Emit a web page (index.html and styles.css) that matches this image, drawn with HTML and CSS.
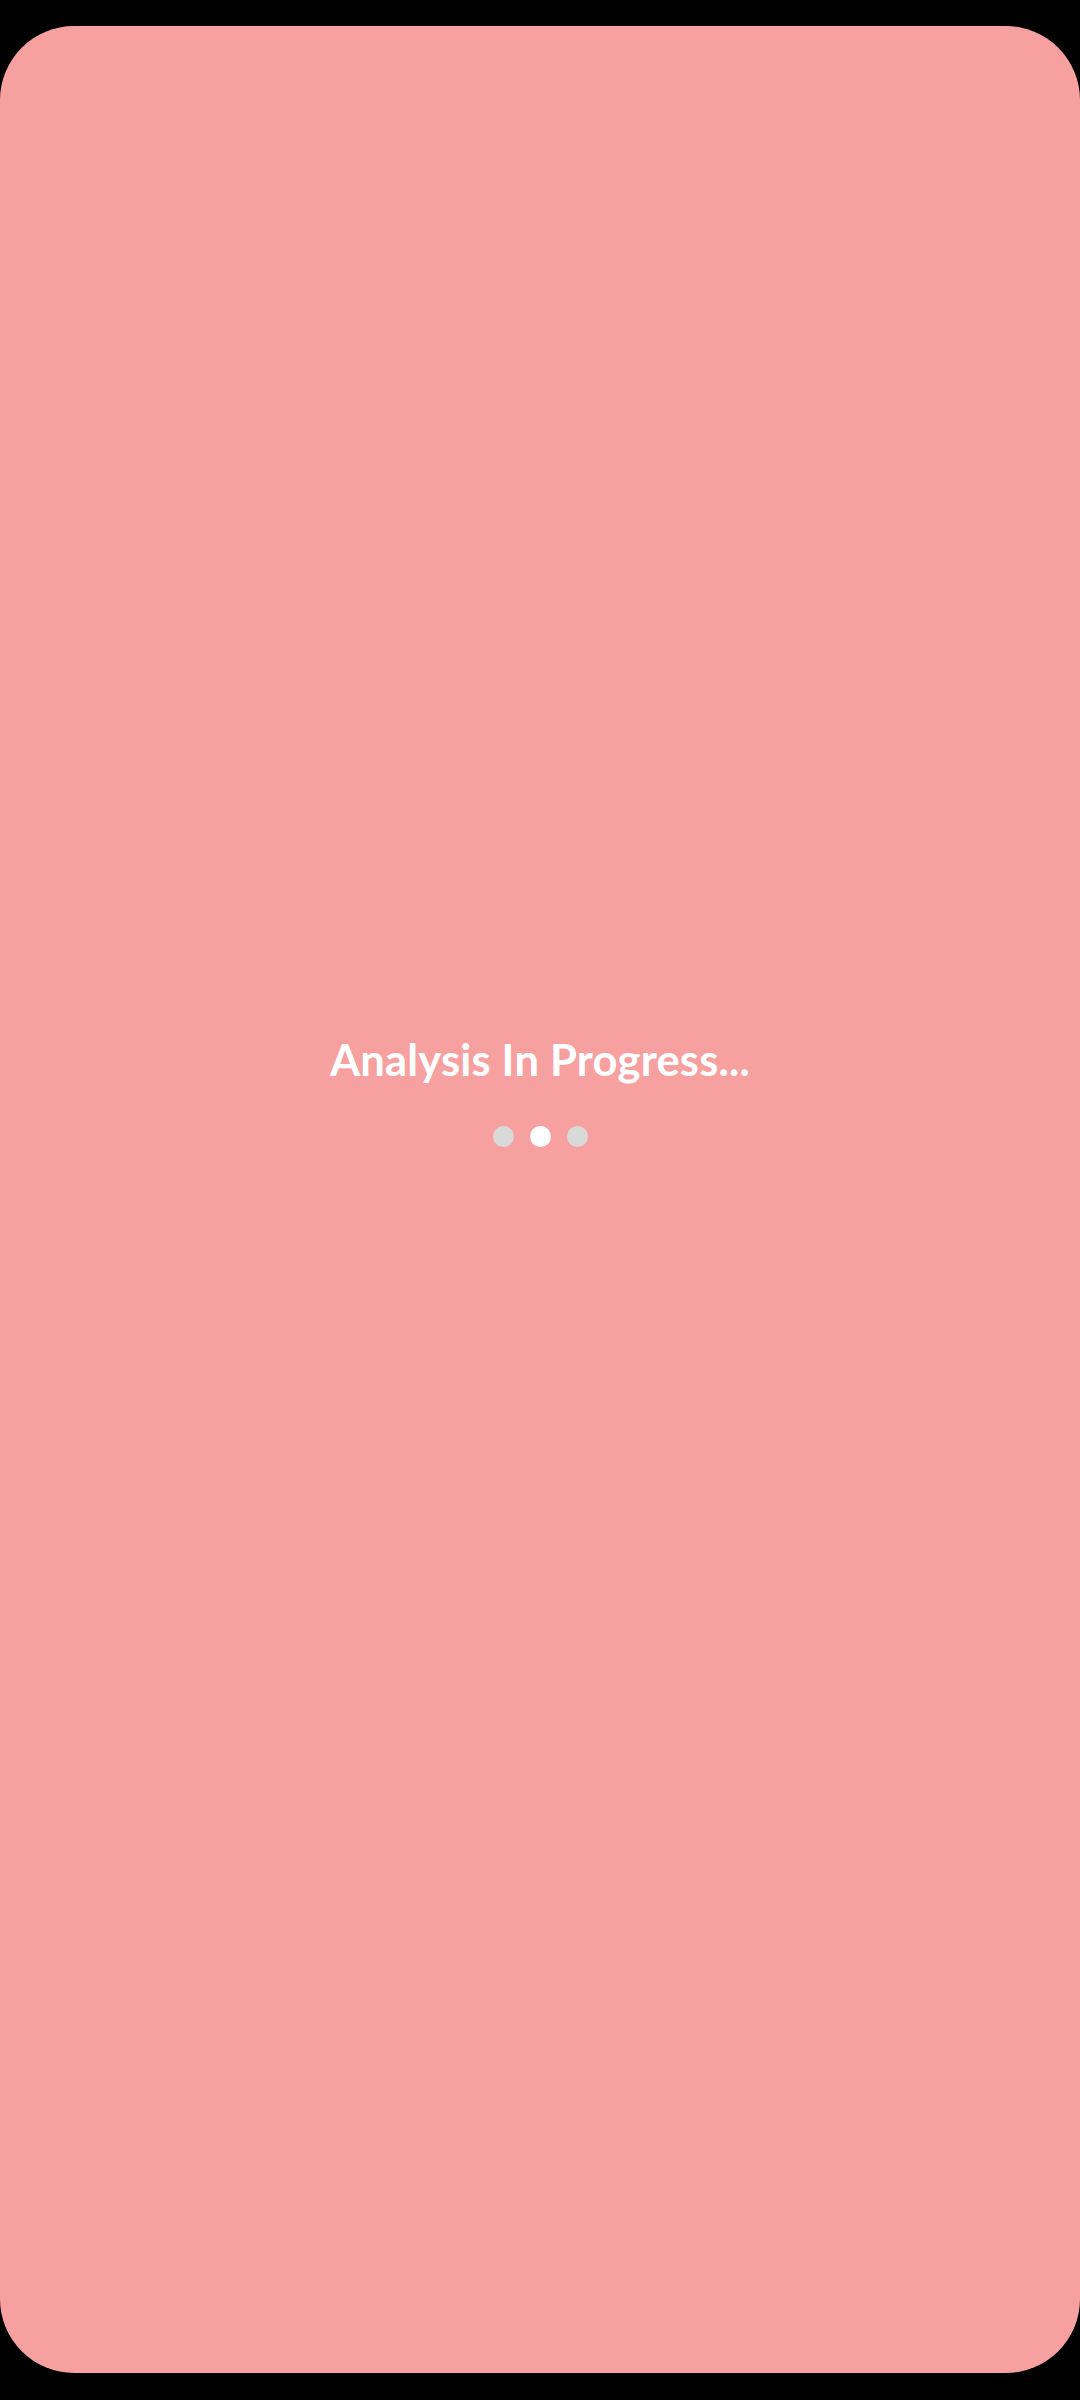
FILE: index.html
```html
<!DOCTYPE html>
<html>
<head>
<meta charset="utf-8">
<link rel="stylesheet" href="styles.css">
</head>
<body>
<div class="screen">
  <h1 class="title">Analysis In Progress...</h1>
  <div class="dots">
    <span class="dot"></span>
    <span class="dot dot-active"></span>
    <span class="dot"></span>
  </div>
</div>
</body>
</html>
```

FILE: styles.css
```css
html, body {
  margin: 0;
  padding: 0;
  background: #000;
  width: 1080px;
  height: 2400px;
  overflow: hidden;
}
.screen {
  margin-top: 26px;
  height: 2347px;
  background: #f7a0a0;
  border-radius: 74px;
  display: flex;
  flex-direction: column;
  align-items: center;
  box-sizing: border-box;
  padding-top: 1003px;
}
.title {
  margin: 0;
  font-family: "Lato", "Open Sans", sans-serif;
  font-weight: 700;
  font-size: 43.5px;
  line-height: 60px;
  color: #fff;
  letter-spacing: 0.2px;
}
.dots {
  display: flex;
  gap: 16px;
  margin-top: 37px;
}
.dot {
  width: 21px;
  height: 21px;
  border-radius: 50%;
  background: #d9d9d9;
}
.dot-active {
  background: #fff;
}
```
